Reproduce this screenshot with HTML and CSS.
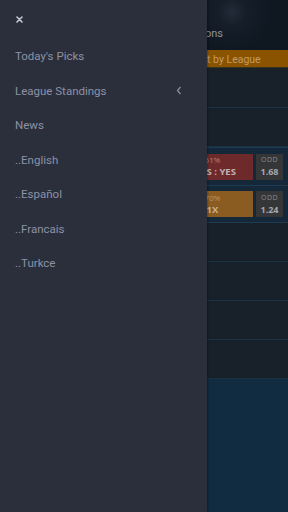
FILE: index.html
```html
<!DOCTYPE html>
<html lang="en">
<head>
    <meta charset="UTF-8">
    <meta name="viewport" content="width=device-width, initial-scale=1.0">
    <title>Picks</title>
    <link rel="stylesheet" href="styles.css">
</head>
<body>
    <div class="app">
        <div class="header">
            <div class="headerTitle">Predictions</div>
        </div>
        <div class="sortBar">Sort by League</div>
        <div class="list">
            <div class="row"></div>
            <div class="row"></div>
            <div class="row pick">
                <div class="tip red">
                    <span class="pct">51%</span>
                    <span class="bet">BTTS : YES</span>
                </div>
                <div class="odd">
                    <span class="oddLabel">ODD</span>
                    <span class="oddValue">1.68</span>
                </div>
            </div>
            <div class="row pick">
                <div class="tip orange">
                    <span class="pct">70%</span>
                    <span class="bet">1X</span>
                </div>
                <div class="odd">
                    <span class="oddLabel">ODD</span>
                    <span class="oddValue">1.24</span>
                </div>
            </div>
            <div class="row"></div>
            <div class="row"></div>
            <div class="row"></div>
            <div class="row"></div>
        </div>
        <div class="footer"></div>
    </div>

    <div class="drawer">
        <div class="closeBtn">
            <svg width="7" height="7" viewBox="0 0 7 7">
                <path d="M1 1 L6 6 M6 1 L1 6" stroke="#c3c8d8" stroke-width="1.6" stroke-linecap="round"/>
            </svg>
        </div>
        <ul class="menu">
            <li>Today's Picks</li>
            <li class="hasSub">League Standings
                <svg class="chevron" width="6" height="9" viewBox="0 0 6 9">
                    <path d="M4.5 1 L1.5 4.5 L4.5 8" fill="none" stroke="#8b92a5" stroke-width="1.2"/>
                </svg>
            </li>
            <li>News</li>
            <li>..English</li>
            <li>..Español</li>
            <li>..Francais</li>
            <li>..Turkce</li>
        </ul>
    </div>
</body>
</html>
```

FILE: styles.css
```css
body {
    margin: 0;
    width: 288px;
    height: 512px;
    overflow: hidden;
    position: relative;
    font-family: Roboto, "Liberation Sans", sans-serif;
    background-color: #112c40;
}
.app {
    display: flex;
    flex-direction: column;
    height: 512px;
}
.header {
    height: 50px;
    background-color: #0f1721;
    background-image: radial-gradient(circle at 232px 12px, #232c38 0, #151e29 14px, #0f1721 40px);
    display: flex;
    align-items: flex-end;
    justify-content: flex-end;
    padding: 0 65px 10px 0;
    box-sizing: border-box;
}
.headerTitle {
    color: #8e939c;
    font-size: 11px;
}
.sortBar {
    height: 18px;
    background-color: #8a5300;
    color: #c49a66;
    font-size: 10.5px;
    line-height: 19px;
    padding-left: 191px;
    border-bottom: 1px solid #3c3220;
    box-sizing: border-box;
    white-space: nowrap;
}
.list {
    display: flex;
    flex-direction: column;
}
.row {
    height: 39px;
    background-color: #18202a;
    border-bottom: 1px solid #1a3144;
    box-sizing: border-box;
    display: flex;
    align-items: center;
    gap: 3px;
    padding: 0 5px 0 172px;
}
.row:first-child {
    height: 40px;
}
.row.pick {
    height: 37px;
    background-color: #14283a;
    border-bottom: 1px solid #1e3b52;
}
.row.pick:nth-child(3) {
    border-top: 1px solid #1e3b52;
    height: 39px;
}
.tip {
    width: 81px;
    height: 26px;
    display: flex;
    flex-direction: column;
    justify-content: center;
    align-items: center;
    font-family: "Open Sans", sans-serif;
}
.tip.red {
    background-color: #6e2a2a;
}
.tip.orange {
    background-color: #8a5c21;
}
.pct {
    font-size: 8px;
    color: #b08282;
    line-height: 10px;
}
.orange .pct {
    color: #bf9464;
}
.bet {
    font-size: 9.5px;
    font-weight: 700;
    color: #c0b3b3;
    line-height: 13px;
}
.orange .bet {
    color: #c8b090;
}
.odd {
    width: 27px;
    height: 26px;
    background-color: #343638;
    display: flex;
    flex-direction: column;
    align-items: center;
    justify-content: center;
    font-family: "Open Sans", sans-serif;
}
.oddLabel {
    font-size: 7px;
    letter-spacing: 0.5px;
    color: #8a8c8e;
    line-height: 10px;
}
.oddValue {
    font-size: 9px;
    font-weight: 700;
    color: #a5a7a9;
    line-height: 13px;
}
.footer {
    flex: 1;
    background-color: #112c40;
}
.drawer {
    position: absolute;
    top: 0;
    left: 0;
    width: 207px;
    height: 512px;
    background-color: #2b2f3b;
    box-shadow: 1px 0 2px rgba(0, 0, 0, 0.3);
}
.closeBtn {
    position: absolute;
    left: 16px;
    top: 16px;
    width: 7px;
    height: 7px;
    line-height: 0;
}
.menu {
    list-style: none;
    margin: 0;
    padding: 39px 0 0 0;
}
.menu li {
    height: 34.5px;
    line-height: 34.5px;
    padding-left: 15px;
    padding-right: 25px;
    color: #8b92a5;
    font-size: 11.5px;
    display: flex;
    align-items: center;
    justify-content: space-between;
}
.chevron {
    display: block;
}
```
